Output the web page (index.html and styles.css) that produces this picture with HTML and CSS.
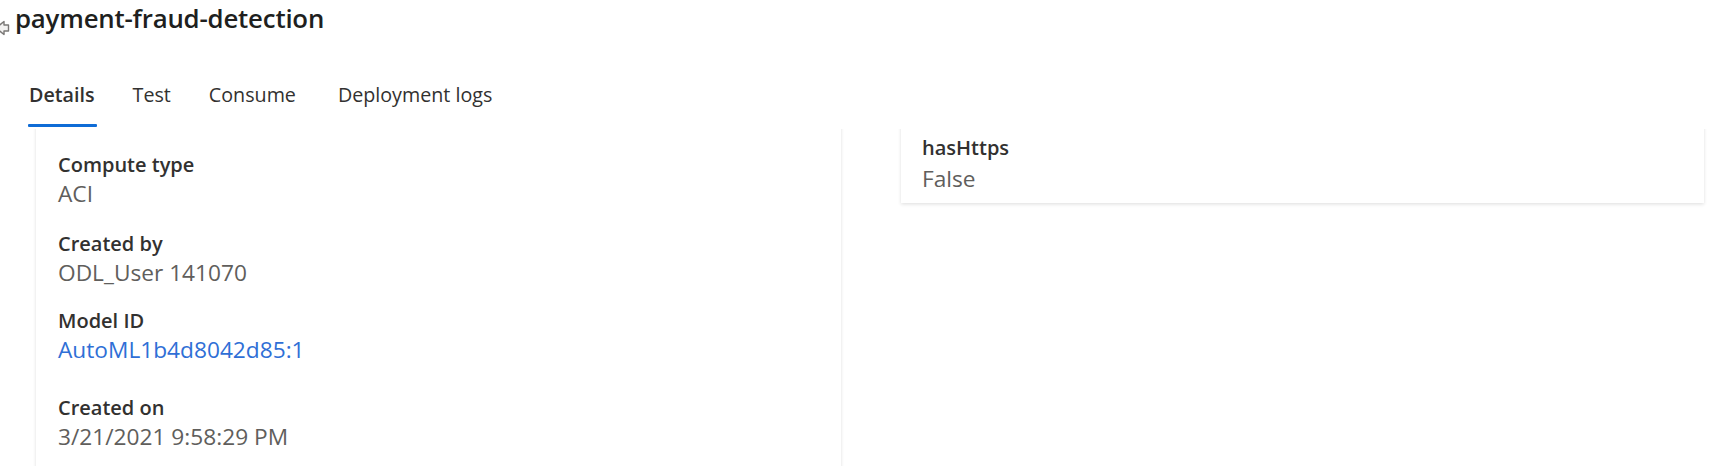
FILE: index.html
```html
<!DOCTYPE html>
<html lang="en">
<head>
<meta charset="utf-8">
<title>payment-fraud-detection</title>
<link rel="stylesheet" href="styles.css">
</head>
<body>
<header class="page-header">
  <svg class="back-icon" width="10" height="16" viewBox="0 0 10 16" aria-hidden="true">
    <path d="M-4 8 L4 1.5 L4 5 L8.5 5 L8.5 11 L4 11 L4 14.5 Z" fill="#f3f2f1" stroke="#7a7876" stroke-width="1.4" stroke-linejoin="round"/>
  </svg>
  <h1 class="title">payment-fraud-detection</h1>
</header>
<nav class="tabs">
  <span class="tab active">Details</span>
  <span class="tab">Test</span>
  <span class="tab">Consume</span>
  <span class="tab tab-wide">Deployment logs</span>
</nav>
<main class="content">
  <section class="card card-left">
    <div class="item">
      <div class="label">Compute type</div>
      <div class="value">ACI</div>
    </div>
    <div class="item">
      <div class="label">Created by</div>
      <div class="value">ODL_User 141070</div>
    </div>
    <div class="item item-link">
      <div class="label">Model ID</div>
      <div class="value"><a class="link" href="#">AutoML1b4d8042d85:1</a></div>
    </div>
    <div class="item">
      <div class="label">Created on</div>
      <div class="value">3/21/2021 9:58:29 PM</div>
    </div>
  </section>
  <section class="card card-right">
    <div class="item">
      <div class="label">hasHttps</div>
      <div class="value value-right">False</div>
    </div>
  </section>
</main>
</body>
</html>
```
FILE: styles.css
```css
html, body {
  margin: 0;
  padding: 0;
  background: #ffffff;
}
body {
  font-family: "Open Sans", "Noto Sans", sans-serif;
  color: #323130;
  width: 1711px;
  height: 466px;
  overflow: hidden;
}
.page-header {
  position: relative;
  padding: 1px 0 0 15px;
  height: 37px;
}
.back-icon {
  position: absolute;
  left: 0;
  top: 20px;
}
.title {
  margin: 0;
  font-size: 25.8px;
  line-height: 34px;
  font-weight: 600;
  color: #201f1e;
  letter-spacing: -0.2px;
}
.tabs {
  display: flex;
  gap: 38px;
  padding-left: 29px;
  margin-top: 43px;
  height: 48px;
}
.tab {
  position: relative;
  font-size: 19.7px;
  line-height: 28px;
  height: 46px;
  color: #323130;
}
.tab-wide {
  margin-left: 4px;
}
.tab.active {
  font-weight: 600;
}
.tab.active::after {
  content: "";
  position: absolute;
  left: -1px;
  right: -2px;
  bottom: 0;
  height: 3px;
  background: #0f6cd6;
  border-radius: 1px;
}
.content {
  display: grid;
  grid-template-columns: 805px 803px;
  column-gap: 60px;
  align-items: start;
  padding: 0 0 0 36px;
  height: 338px;
  overflow: hidden;
}
.card {
  background: #ffffff;
  margin-top: -10px;
  box-shadow: 0 1.6px 3.6px 0 rgba(0, 0, 0, 0.12), 0 0.3px 0.9px 0 rgba(0, 0, 0, 0.1);
}
.card-left {
  padding: 32px 22px 40px;
  min-height: 400px;
}
.card-right {
  padding: 15px 21px 8px;
}
.item + .item {
  margin-top: 20px;
}
.item + .item-link {
  margin-top: 18px;
}
.item-link + .item {
  margin-top: 28px;
}
.label {
  font-size: 20px;
  line-height: 27px;
  font-weight: 600;
  color: #323130;
}
.value {
  font-size: 22.7px;
  line-height: 32px;
  color: #605e5c;
}
.value-right {
  margin-top: 2px;
}
.link {
  color: #2f6fd6;
  text-decoration: none;
}
```
